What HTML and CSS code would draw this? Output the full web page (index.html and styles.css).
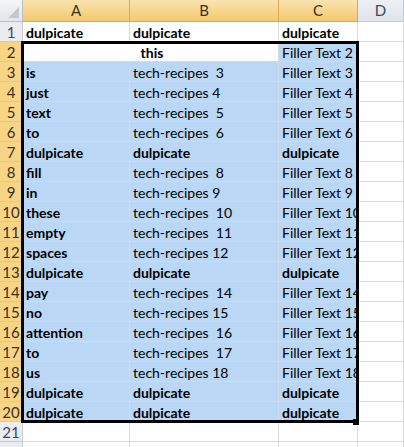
FILE: index.html
```html
<!DOCTYPE html>
<html>
<head>
<meta charset="utf-8">
<link rel="stylesheet" href="styles.css">
</head>
<body>
<div class="wrap">
<div class="sheet">
  <div class="corner"><span class="tri"></span></div>
  <div class="ch on">A</div><div class="ch on">B</div><div class="ch on">C</div><div class="ch">D</div>

  <div class="rh">1</div><div class="c b">dulpicate</div><div class="c b">dulpicate</div><div class="c b">dulpicate</div><div class="c"></div>
  <div class="rh on">2</div><div class="c b m">this</div><div class="c s">Filler Text 2</div><div class="c"></div>
  <div class="rh on">3</div><div class="c s b">is</div><div class="c s">tech-recipes  3</div><div class="c s">Filler Text 3</div><div class="c"></div>
  <div class="rh on">4</div><div class="c s b">just</div><div class="c s">tech-recipes 4</div><div class="c s">Filler Text 4</div><div class="c"></div>
  <div class="rh on">5</div><div class="c s b">text</div><div class="c s">tech-recipes  5</div><div class="c s">Filler Text 5</div><div class="c"></div>
  <div class="rh on">6</div><div class="c s b">to</div><div class="c s">tech-recipes  6</div><div class="c s">Filler Text 6</div><div class="c"></div>
  <div class="rh on">7</div><div class="c s b">dulpicate</div><div class="c s b">dulpicate</div><div class="c s b">dulpicate</div><div class="c"></div>
  <div class="rh on">8</div><div class="c s b">fill</div><div class="c s">tech-recipes  8</div><div class="c s">Filler Text 8</div><div class="c"></div>
  <div class="rh on">9</div><div class="c s b">in</div><div class="c s">tech-recipes 9</div><div class="c s">Filler Text 9</div><div class="c"></div>
  <div class="rh on">10</div><div class="c s b">these</div><div class="c s">tech-recipes  10</div><div class="c s">Filler Text 10</div><div class="c"></div>
  <div class="rh on">11</div><div class="c s b">empty</div><div class="c s">tech-recipes  11</div><div class="c s">Filler Text 11</div><div class="c"></div>
  <div class="rh on">12</div><div class="c s b">spaces</div><div class="c s">tech-recipes 12</div><div class="c s">Filler Text 12</div><div class="c"></div>
  <div class="rh on">13</div><div class="c s b">dulpicate</div><div class="c s b">dulpicate</div><div class="c s b">dulpicate</div><div class="c"></div>
  <div class="rh on">14</div><div class="c s b">pay</div><div class="c s">tech-recipes  14</div><div class="c s">Filler Text 14</div><div class="c"></div>
  <div class="rh on">15</div><div class="c s b">no</div><div class="c s">tech-recipes 15</div><div class="c s">Filler Text 15</div><div class="c"></div>
  <div class="rh on">16</div><div class="c s b">attention</div><div class="c s">tech-recipes  16</div><div class="c s">Filler Text 16</div><div class="c"></div>
  <div class="rh on">17</div><div class="c s b">to</div><div class="c s">tech-recipes  17</div><div class="c s">Filler Text 17</div><div class="c"></div>
  <div class="rh on">18</div><div class="c s b">us</div><div class="c s">tech-recipes 18</div><div class="c s">Filler Text 18</div><div class="c"></div>
  <div class="rh on">19</div><div class="c s b">dulpicate</div><div class="c s b">dulpicate</div><div class="c s b">dulpicate</div><div class="c"></div>
  <div class="rh on">20</div><div class="c s b">dulpicate</div><div class="c s b">dulpicate</div><div class="c s b">dulpicate</div><div class="c"></div>
  <div class="rh">21</div><div class="c"></div><div class="c"></div><div class="c"></div><div class="c"></div>
  <div class="rh">22</div><div class="c"></div><div class="c"></div><div class="c"></div><div class="c"></div>
</div>
<div class="selbox"></div>
<div class="handle"></div>
</div>
</body>
</html>
```

FILE: styles.css
```css
html, body {
  margin: 0;
  padding: 0;
  background: #fff;
  width: 404px;
  height: 447px;
  overflow: hidden;
}
.wrap {
  position: relative;
  width: 404px;
  height: 447px;
  overflow: hidden;
}
.sheet {
  display: grid;
  grid-template-columns: 23px 107px 149px 79px 1fr;
  grid-template-rows: 22px;
  grid-auto-rows: 20px;
  font-family: Lato, "Liberation Sans", sans-serif;
  font-size: 14px;
  color: #000;
}
.sheet > div {
  box-sizing: border-box;
  overflow: hidden;
  white-space: pre;
}
.corner {
  position: relative;
  background: linear-gradient(#f4f5f7, #e3e6ea);
  border-right: 1px solid #b9bec6;
  border-bottom: 1px solid #b9bec6;
}
.tri {
  position: absolute;
  right: 3px;
  bottom: 3px;
  width: 0;
  height: 0;
  border-left: 11px solid transparent;
  border-bottom: 11px solid #c4c8cd;
}
.ch {
  background: linear-gradient(#edf0f4, #dfe3e8);
  border-right: 1px solid #c6cbd2;
  border-bottom: 1px solid #c6cbd2;
  text-align: center;
  line-height: 21px;
  color: #3a4a5c;
  font-size: 15px;
}
.ch.on {
  background: linear-gradient(#fae3b0, #f4c96e);
  border-right: 1px solid #dcaa4c;
  border-bottom: 1px solid #dcaa4c;
  color: #3c3020;
}
.rh {
  background: #e9ecf0;
  border-right: 1px solid #c6cbd2;
  border-bottom: 1px solid #c6cbd2;
  text-align: center;
  line-height: 20px;
  color: #3a4a5c;
  font-size: 15px;
}
.rh.on {
  background: #f8d485;
  border-right: 1px solid #dcaa4c;
  border-bottom: 1px solid #edc77a;
  color: #3c3020;
}
.c {
  border-right: 1px solid #d9d9d9;
  border-bottom: 1px solid #d9d9d9;
  padding: 0 0 0 3px;
  line-height: 21px;
}
.c.s {
  background: #bad7f5;
  border-right-color: #d2dbe5;
  border-bottom-color: #d2dbe5;
}
.b {
  font-weight: bold;
}
.m {
  grid-column: span 2;
  text-align: center;
  background: #fff;
}
.selbox {
  position: absolute;
  left: 21px;
  top: 41px;
  width: 332px;
  height: 376px;
  border: 3px solid #000;
}
.handle {
  position: absolute;
  left: 353px;
  top: 419px;
  width: 6px;
  height: 6px;
  background: #000;
  border-right: 1px solid #fff;
  border-bottom: 1px solid #fff;
}
```
